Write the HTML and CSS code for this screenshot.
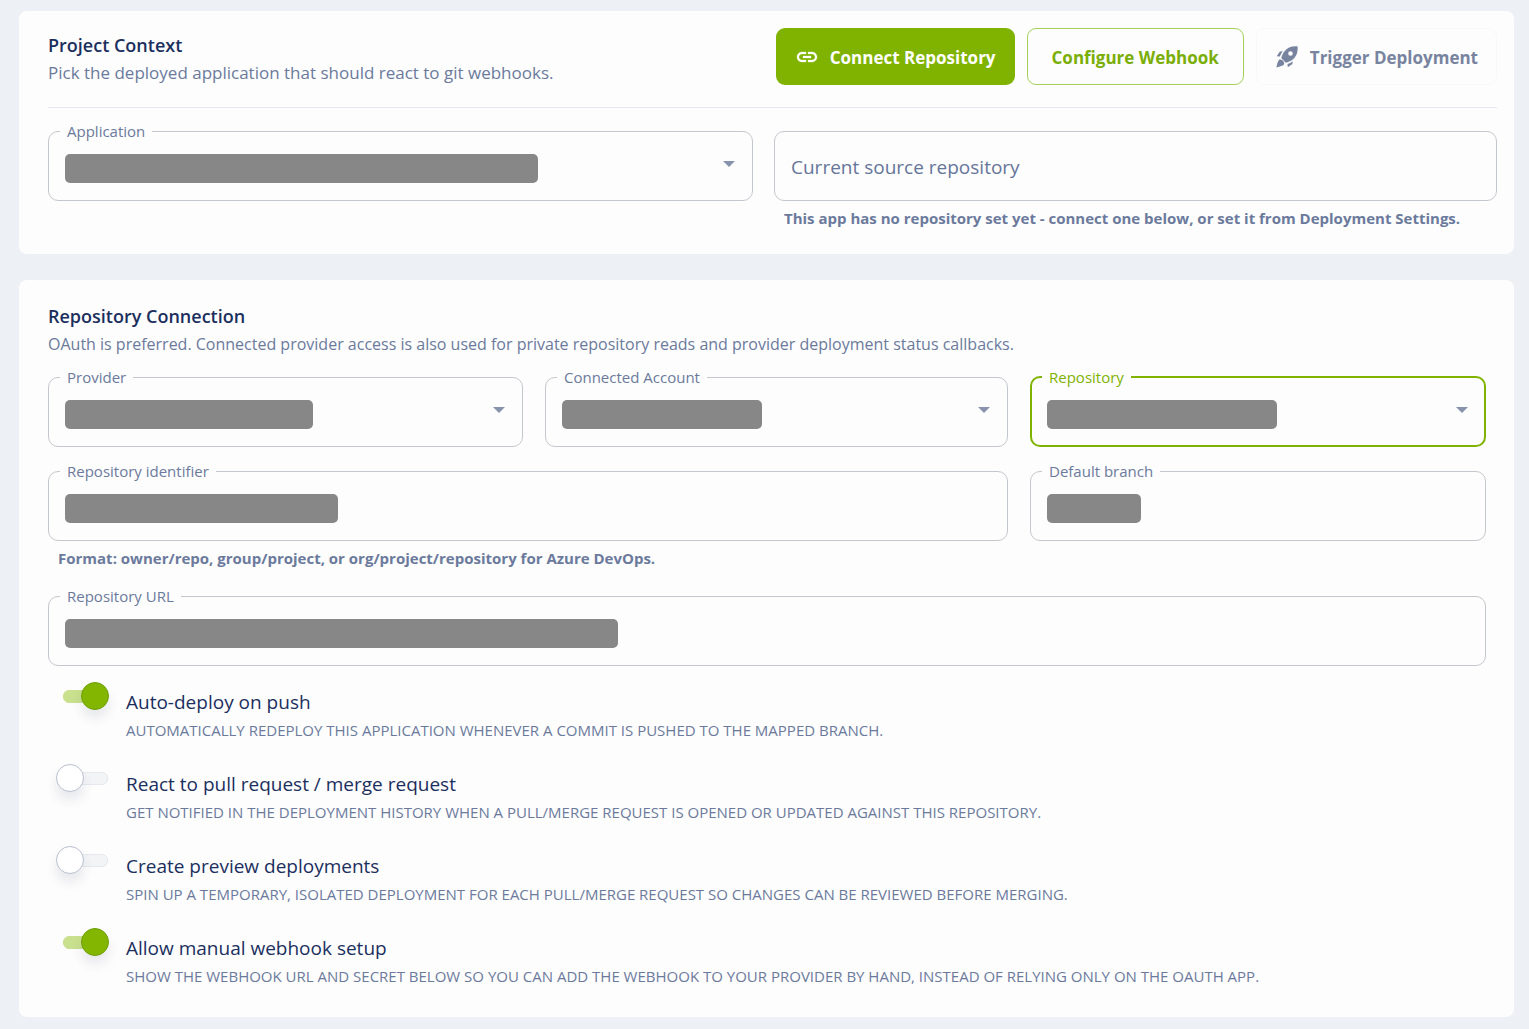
FILE: index.html
```html
<!DOCTYPE html>
<html lang="en">
<head>
    <meta charset="UTF-8">
    <meta name="viewport" content="width=device-width, initial-scale=1.0">
    <title>Git Webhooks</title>
    <link rel="stylesheet" href="styles.css">
</head>
<body>
    <main class="page">
        <section class="card context-card">
            <header class="card-header">
                <div class="heading">
                    <h2>Project Context</h2>
                    <p class="subtitle">Pick the deployed application that should react to git webhooks.</p>
                </div>
                <div class="actions">
                    <button type="button" class="btn btn-primary">
                        <svg class="icon" viewBox="0 0 24 24" fill="currentColor" aria-hidden="true">
                            <path d="M3.9 12c0-1.71 1.39-3.1 3.1-3.1h4V7H7c-2.76 0-5 2.24-5 5s2.24 5 5 5h4v-1.9H7c-1.71 0-3.1-1.39-3.1-3.1zM8 13h8v-2H8v2zm9-6h-4v1.9h4c1.71 0 3.1 1.39 3.1 3.1s-1.39 3.1-3.1 3.1h-4V17h4c2.76 0 5-2.24 5-5s-2.24-5-5-5z" stroke="currentColor" stroke-width="0.3"/>
                        </svg>
                        Connect Repository
                    </button>
                    <button type="button" class="btn btn-outline">Configure Webhook</button>
                    <button type="button" class="btn btn-ghost">
                        <svg class="icon" viewBox="0 0 24 24" fill="currentColor" aria-hidden="true">
                            <path fill-rule="evenodd" d="M22.6 1.4c-6-.4-10.600 1.300-13.700 5.600-1.300 1.900-2.100 4-2.600 6.200l4.500 4.500c2.300-.5 4.400-1.300 6.200-2.600 4.300-3.100 6-7.700 5.600-13.700zM15.500 6.200a2.300 2.300 0 1 1 0 4.600 2.300 2.300 0 0 1 0-4.600z"/>
                            <path d="M7.800 6.300 4.900 6.600 1.700 11.200l3.200.3c.6-2 1.600-3.700 2.900-5.200zM17.700 16.200l-.3 2.900-4.600 3.200-.3-3.200c2-.6 3.700-1.600 5.200-2.900zM3.900 14.900c1.600-1 4.200.2 5.200 2.600.5 1.400-.3 2.400-1.400 3-1.700.8-3.800 1.500-6.300 2.100.5-2.700 1.200-5.800 2.500-7.700z"/>
                        </svg>
                        Trigger Deployment
                    </button>
                </div>
            </header>

            <div class="context-fields">
                <fieldset class="field">
                    <legend><label for="application">Application</label></legend>
                    <div class="control">
                        <span class="redacted application-value"></span>
                        <select id="application"><option></option></select>
                        <span class="arrow"></span>
                    </div>
                </fieldset>
                <div>
                    <fieldset class="field no-legend">
                        <div class="control">
                            <input type="text" id="current-repo" aria-label="Current source repository" placeholder="Current source repository">
                        </div>
                    </fieldset>
                    <p class="helper">This app has no repository set yet - connect one below, or set it from Deployment Settings.</p>
                </div>
            </div>
        </section>

        <section class="card connection-card">
            <h2>Repository Connection</h2>
            <p class="subtitle">OAuth is preferred. Connected provider access is also used for private repository reads and provider deployment status callbacks.</p>

            <div class="connection-fields">
                <fieldset class="field">
                    <legend><label for="provider">Provider</label></legend>
                    <div class="control">
                        <span class="redacted provider-value"></span>
                        <select id="provider"><option></option></select>
                        <span class="arrow"></span>
                    </div>
                </fieldset>
                <fieldset class="field">
                    <legend><label for="account">Connected Account</label></legend>
                    <div class="control">
                        <span class="redacted account-value"></span>
                        <select id="account"><option></option></select>
                        <span class="arrow"></span>
                    </div>
                </fieldset>
                <fieldset class="field active">
                    <legend><label for="repository">Repository</label></legend>
                    <div class="control">
                        <span class="redacted repository-value"></span>
                        <select id="repository"><option></option></select>
                        <span class="arrow"></span>
                    </div>
                </fieldset>
                <div class="wide">
                    <fieldset class="field">
                        <legend><label for="identifier">Repository identifier</label></legend>
                        <div class="control">
                            <span class="redacted identifier-value"></span>
                            <input type="text" id="identifier">
                        </div>
                    </fieldset>
                    <p class="helper">Format: owner/repo, group/project, or org/project/repository for Azure DevOps.</p>
                </div>
                <fieldset class="field">
                    <legend><label for="branch">Default branch</label></legend>
                    <div class="control">
                        <span class="redacted branch-value"></span>
                        <input type="text" id="branch">
                    </div>
                </fieldset>
                <fieldset class="field full">
                    <legend><label for="url">Repository URL</label></legend>
                    <div class="control">
                        <span class="redacted url-value"></span>
                        <input type="text" id="url">
                    </div>
                </fieldset>
            </div>

            <div class="switches">
                <div class="switch-row">
                    <input type="checkbox" class="switch" id="auto-deploy" checked>
                    <label for="auto-deploy">
                        <span class="switch-title">Auto-deploy on push</span>
                        <span class="switch-text">Automatically redeploy this application whenever a commit is pushed to the mapped branch.</span>
                    </label>
                </div>
                <div class="switch-row">
                    <input type="checkbox" class="switch" id="react-pr">
                    <label for="react-pr">
                        <span class="switch-title">React to pull request / merge request</span>
                        <span class="switch-text">Get notified in the deployment history when a pull/merge request is opened or updated against this repository.</span>
                    </label>
                </div>
                <div class="switch-row">
                    <input type="checkbox" class="switch" id="preview">
                    <label for="preview">
                        <span class="switch-title">Create preview deployments</span>
                        <span class="switch-text">Spin up a temporary, isolated deployment for each pull/merge request so changes can be reviewed before merging.</span>
                    </label>
                </div>
                <div class="switch-row">
                    <input type="checkbox" class="switch" id="manual" checked>
                    <label for="manual">
                        <span class="switch-title">Allow manual webhook setup</span>
                        <span class="switch-text">Show the webhook URL and secret below so you can add the webhook to your provider by hand, instead of relying only on the OAuth app.</span>
                    </label>
                </div>
            </div>
        </section>
    </main>
</body>
</html>
```
FILE: styles.css
```css
* {
    margin: 0;
    padding: 0;
    box-sizing: border-box;
}

body {
    background-color: #edf0f4;
    color: #6b7a9c;
    font-family: "Open Sans", "Noto Sans", sans-serif;
    font-size: 17px;
}

button,
input,
select {
    font: inherit;
    color: inherit;
}

.page {
    display: flex;
    flex-direction: column;
    gap: 26px;
    padding: 11px 15px 12px 19px;
}

.card {
    background-color: #fdfdfd;
    border-radius: 8px;
}

.context-card {
    padding: 17px 17px 22px 29px;
}

.connection-card {
    padding: 22px 28px 27px 29px;
}

h2 {
    color: #1b2f5e;
    font-size: 18px;
    font-weight: 600;
    line-height: 28px;
}

.subtitle {
    line-height: 28px;
}

.connection-card .subtitle {
    font-size: 16px;
}

/* Header with buttons */
.card-header {
    display: flex;
    justify-content: space-between;
    align-items: flex-start;
    padding-bottom: 22px;
    border-bottom: 1px solid #e5e8ef;
}

.heading {
    padding-top: 3px;
    margin-bottom: -3px;
}

.actions {
    display: flex;
    gap: 12px;
}

.btn {
    display: flex;
    align-items: center;
    gap: 11px;
    height: 57px;
    padding: 1px 18px 0;
    border: 1px solid transparent;
    border-radius: 9px;
    background: none;
    font-weight: 700;
    white-space: nowrap;
    cursor: pointer;
}

.btn-primary {
    background-color: #7fb300;
    color: #ffffff;
}

.btn-outline {
    padding: 1px 24px 0;
    border-color: #a5d05a;
    color: #7aae08;
}

.btn-ghost {
    border-color: #f9f9fb;
    color: #78849f;
}

.icon {
    width: 24px;
    height: 24px;
}

/* Fields */
.context-fields {
    display: grid;
    grid-template-columns: 705fr 723fr;
    gap: 21px;
    padding-top: 13px;
}

.connection-fields {
    display: grid;
    grid-template-columns: 475fr 463fr 456fr;
    column-gap: 22px;
    row-gap: 14px;
    padding-top: 9px;
}

.wide {
    grid-column: span 2;
}

.full {
    grid-column: 1 / -1;
}

.field {
    min-width: 0;
    height: 80px;
    padding: 0 16px;
    border: 1px solid #c4c7cc;
    border-radius: 10px;
}

.field legend {
    margin-left: -5px;
    padding: 0 7px;
    font-size: 15px;
    line-height: 20px;
}

.field.no-legend {
    height: 70px;
    margin-top: 10px;
}

.field.active {
    border: 2px solid #7fb300;
    padding: 0 15px;
}

.field.active legend {
    color: #7fb300;
}

.control {
    display: grid;
    align-items: center;
    height: 54px;
}

.no-legend .control {
    height: 70px;
}

.control > * {
    grid-area: 1 / 1;
}

.control input,
.control select {
    width: 100%;
    height: 44px;
    border: none;
    outline: none;
    background: none;
    appearance: none;
    font-size: 19px;
}

.control input::placeholder {
    color: #66759a;
    opacity: 1;
}

.arrow {
    justify-self: end;
    width: 12px;
    height: 6px;
    margin: 0 1px 8px 0;
    background-color: #8792ad;
    clip-path: polygon(0 0, 100% 0, 50% 100%);
    pointer-events: none;
}

.redacted {
    height: 29px;
    border-radius: 5px;
    background-color: #878787;
}

.application-value { width: 473px; }
.provider-value { width: 248px; }
.account-value { width: 200px; }
.repository-value { width: 230px; }
.identifier-value { width: 273px; }
.branch-value { width: 94px; }
.url-value { width: 553px; }

.helper {
    padding: 5px 10px 2px;
    font-size: 15px;
    font-weight: 700;
    line-height: 24px;
}

/* Switches */
.switches {
    display: flex;
    flex-direction: column;
    gap: 20px;
    padding: 16px 0 0 8px;
}

.switch-row {
    display: flex;
    gap: 17px;
}

.switch {
    position: relative;
    flex: none;
    width: 53px;
    height: 26px;
    appearance: none;
    cursor: pointer;
}

.switch::before {
    content: "";
    position: absolute;
    top: 8px;
    left: 7px;
    width: 43px;
    height: 11px;
    border: 1px solid #e6e8ec;
    border-radius: 6px;
    background-color: #f3f4f6;
}

.switch::after {
    content: "";
    position: absolute;
    top: 0;
    left: 0;
    width: 26px;
    height: 26px;
    border: 1px solid #b9c0d0;
    border-radius: 50%;
    background-color: #ffffff;
    box-shadow: 0 8px 12px rgba(40, 50, 90, 0.1);
}

.switch:checked::before {
    border-color: #c9e08f;
    background-color: #c9e08f;
}

.switch:checked::after {
    left: auto;
    right: 0;
    border-color: #6f9f0a;
    background-color: #82b600;
}

.switch-title,
.switch-text {
    display: block;
    line-height: 28px;
}

.switch-title {
    padding-top: 6px;
    color: #1b2f5e;
    font-size: 19px;
}

.switch-text {
    font-size: 15px;
    text-transform: uppercase;
}
```
